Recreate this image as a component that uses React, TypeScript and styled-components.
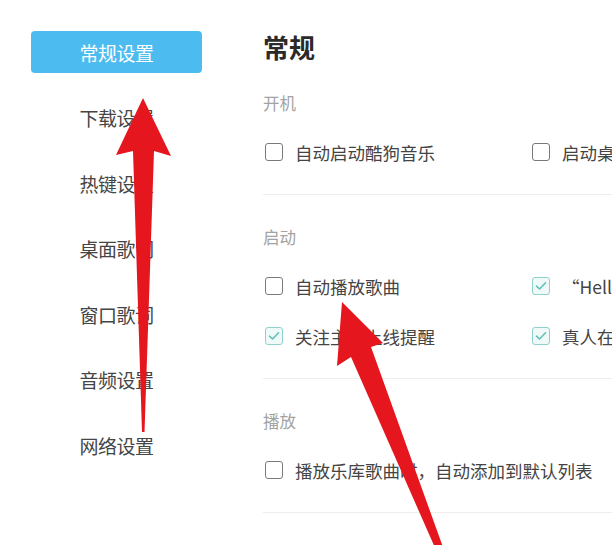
import styled, { createGlobalStyle } from 'styled-components';

const GlobalStyle = createGlobalStyle`
  html, body {
    margin: 0;
    padding: 0;
    background: #ffffff;
    overflow: hidden;
  }
  body {
    font-family: "Noto Sans CJK SC", "Noto Sans", sans-serif;
  }
`;

export const Page = styled.div`
  position: relative;
  width: 612px;
  height: 545px;
  display: flex;
  flex-direction: row;
  overflow: hidden;
  background: #ffffff;
`;

export const Sidebar = styled.ul`
  margin: 0;
  padding: 31px 0 0 31px;
  width: 171px;
  flex-shrink: 0;
  list-style: none;
  display: flex;
  flex-direction: column;
  gap: 23.6px;
`;

export const NavItem = styled.li<{ $active?: boolean }>`
  height: 42px;
  display: flex;
  align-items: center;
  justify-content: center;
  border-radius: 4px;
  font-size: 19px;
  letter-spacing: -0.5px;
  color: ${(props) => (props.$active ? '#ffffff' : '#454545')};
  background-color: ${(props) => (props.$active ? '#4cbcf0' : 'transparent')};
`;

export const Main = styled.div`
  flex: 1;
  margin-left: 61px;
  padding-top: 32px;
  min-width: 0;
`;

export const Title = styled.h1`
  margin: 0;
  height: 29px;
  line-height: 29px;
  font-size: 26px;
  font-weight: 700;
  color: #2a2a2a;
`;

export const Section = styled.section`
  padding: 30px 0 17px;
  border-bottom: 1px solid #eeeeee;
`;

export const SectionLabel = styled.div`
  height: 24px;
  line-height: 24px;
  margin-bottom: 12px;
  font-size: 16.5px;
  color: #a3a3a3;
`;

export const OptionGrid = styled.div`
  display: grid;
  grid-template-columns: 267px 267px;
`;

export const Option = styled.label`
  height: 50px;
  display: flex;
  align-items: center;
  gap: 12px;
  padding-left: 2px;
  font-size: 17.5px;
  color: #444444;
  white-space: nowrap;
`;

export const Box = styled.span<{ $checked?: boolean }>`
  width: 18px;
  height: 18px;
  box-sizing: border-box;
  flex-shrink: 0;
  border-radius: 3px;
  border: 1.5px solid ${(props) => (props.$checked ? '#8fd1cb' : '#7a7a7a')};
  background: ${(props) => (props.$checked ? '#eef9f8' : '#ffffff')};
  display: flex;
  align-items: center;
  justify-content: center;
`;

export const Arrows = styled.svg`
  position: absolute;
  left: 0;
  top: 0;
  pointer-events: none;
`;

type Item = { label: string; checked?: boolean };

const sections: { name: string; items: Item[] }[] = [
  {
    name: '开机',
    items: [{ label: '自动启动酷狗音乐' }, { label: '启动桌面歌词' }],
  },
  {
    name: '启动',
    items: [
      { label: '自动播放歌曲' },
      { label: ' “Hello酷狗”问候语', checked: true },
      { label: '关注主播上线提醒', checked: true },
      { label: '真人在线提醒', checked: true },
    ],
  },
  {
    name: '播放',
    items: [{ label: '播放乐库歌曲时，自动添加到默认列表' }],
  },
  {
    name: '下载',
    items: [{ label: '下载完成后提醒' }],
  },
];

const navItems = ['常规设置', '下载设置', '热键设置', '桌面歌词', '窗口歌词', '音频设置', '网络设置'];

function CheckBox({ checked }: { checked?: boolean }) {
  return (
    <Box $checked={checked}>
      {checked && (
        <svg width="12" height="10" viewBox="0 0 12 10">
          <path d="M1.5 5.2 L4.6 8 L10.5 1.8" fill="none" stroke="#62c0b8" strokeWidth="1.6" strokeLinecap="round" strokeLinejoin="round" />
        </svg>
      )}
    </Box>
  );
}

function App() {
  return (
    <>
      <GlobalStyle />
      <Page>
        <Sidebar>
          {navItems.map((name, i) => (
            <NavItem key={name} $active={i === 0}>
              {name}
            </NavItem>
          ))}
        </Sidebar>
        <Main>
          <Title>常规</Title>
          {sections.map((section) => (
            <Section key={section.name}>
              <SectionLabel>{section.name}</SectionLabel>
              <OptionGrid>
                {section.items.map((item) => (
                  <Option key={item.label}>
                    <CheckBox checked={item.checked} />
                    <span>{item.label}</span>
                  </Option>
                ))}
              </OptionGrid>
            </Section>
          ))}
        </Main>
        {/* red annotation arrows drawn over the screenshot */}
        <Arrows width="612" height="545" viewBox="0 0 612 545">
          <polygon points="143,98 171,156 154,151 144.5,432 142,432 133,151 116,155" fill="#e6161f" />
          <polygon points="342,302 383,343 371,347 444,550 436,550 351,357 337,366" fill="#e6161f" />
        </Arrows>
      </Page>
    </>
  );
}

export default App;
